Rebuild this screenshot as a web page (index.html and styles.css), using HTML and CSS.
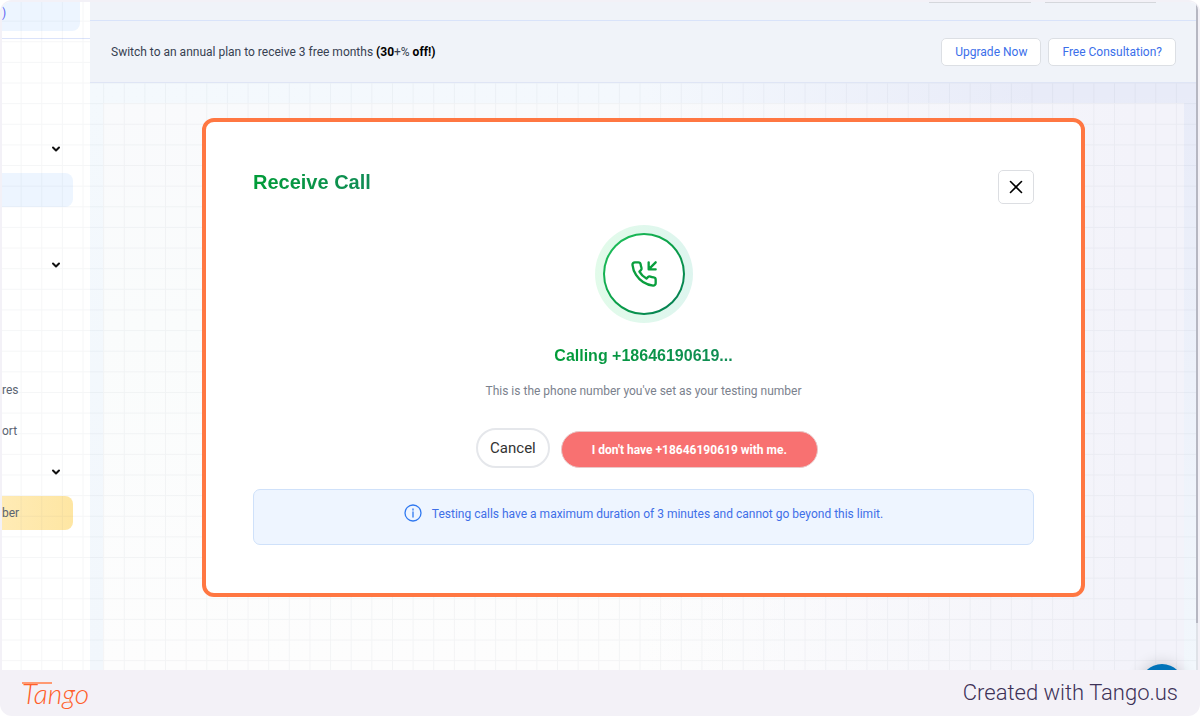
FILE: index.html
```
<!DOCTYPE html>
<html lang="en">
<head>
	<meta charset="UTF-8">
	<meta name="viewport" content="width=device-width, initial-scale=1">
	<title>Receive Call</title>
	<link rel="stylesheet" href="styles.css">
</head>
<body>
<div class="frame">
  <div class="screen">
    <nav class="sidebar">
      <div class="side-top">
        <a class="side-logo" href="#">)</a>
      </div>
      <div class="side-list">
        <button class="side-item toggle" type="button" aria-label="Toggle section">
          <svg class="chevron" viewBox="0 0 10 8"><path d="M2 2.5l3 3 3-3"/></svg>
        </button>
        <a class="side-item active" href="#" aria-label="Current page"></a>
        <button class="side-item toggle second" type="button" aria-label="Toggle section">
          <svg class="chevron" viewBox="0 0 10 8"><path d="M2 2.5l3 3 3-3"/></svg>
        </button>
        <a class="side-item third" href="#">res</a>
        <a class="side-item" href="#">ort</a>
        <button class="side-item toggle" type="button" aria-label="Toggle section">
          <svg class="chevron" viewBox="0 0 10 8"><path d="M2 2.5l3 3 3-3"/></svg>
        </button>
        <a class="side-item number" href="#">ber</a>
      </div>
    </nav>

    <div class="main">
      <div class="topbar">
        <span class="tab"></span>
        <span class="tab wide"></span>
      </div>
      <div class="banner">
        <p class="banner-text">Switch to an annual plan to receive 3 free months <b>(30</b>+%<b> off!)</b></p>
        <button class="btn" type="button">Upgrade Now</button>
        <button class="btn" type="button">Free Consultation?</button>
      </div>
      <div class="canvas">
        <div class="canvas-inner"></div>
        <div class="dialog" role="dialog" aria-labelledby="dialog-title">
          <div class="dialog-head">
            <h1 class="title" id="dialog-title">Receive Call</h1>
            <button class="close" type="button" aria-label="Close">
              <svg viewBox="0 0 14 14"><path d="M1.5 1.5l11 11M12.5 1.5l-11 11"/></svg>
            </button>
          </div>
          <div class="halo">
            <div class="ring">
              <div class="disc">
                <svg class="phone" viewBox="0 0 24 24">
                  <path d="M22 2l-6 6M16 2v6h6"/>
                  <path d="M22 16.92v3a2 2 0 0 1-2.18 2 19.79 19.79 0 0 1-8.63-3.07 19.5 19.5 0 0 1-6-6 19.79 19.79 0 0 1-3.07-8.67A2 2 0 0 1 4.11 2h3a2 2 0 0 1 2 1.72 12.84 12.84 0 0 0 .7 2.81 2 2 0 0 1-.45 2.11L8.09 9.91a16 16 0 0 0 6 6l1.27-1.27a2 2 0 0 1 2.11-.45 12.84 12.84 0 0 0 2.81.7A2 2 0 0 1 22 16.92z"/>
                </svg>
              </div>
            </div>
          </div>
          <h2 class="calling">Calling +18646190619...</h2>
          <p class="hint">This is the phone number you've set as your testing number</p>
          <div class="actions">
            <button class="cancel" type="button">Cancel</button>
            <button class="decline" type="button">I don't have +18646190619 with me.</button>
          </div>
          <div class="notice">
            <svg class="info" viewBox="0 0 18 18"><circle cx="9" cy="9" r="8"/><path d="M9 8v5M9 5v1"/></svg>
            <p>Testing calls have a maximum duration of 3 minutes and cannot go beyond this limit.</p>
          </div>
        </div>
      </div>
    </div>

    <svg class="lines" aria-hidden="true">
      <defs>
        <pattern id="cell" x="-2" y="-2" width="20.63" height="20.63" patternUnits="userSpaceOnUse">
          <path d="M0 .5H21M.5 0V21"/>
        </pattern>
      </defs>
      <rect width="100%" height="100%" fill="url(#cell)"/>
    </svg>
    <span class="chat"></span>
    <span class="scroll"></span>
  </div>

  <footer class="footer">
    <a class="brand" href="#">Tango</a>
    <p class="credit">Created with Tango.us</p>
  </footer>
</div>
</body>
</html>
```
FILE: styles.css
```
* {
  box-sizing: border-box;
  margin: 0;
  padding: 0;
}

body {
  background-color: #fff;
  font: 12px/16px Roboto, "Open Sans", sans-serif;
  color: #374151;
}

button {
  font: inherit;
  cursor: pointer;
}

a {
  color: inherit;
  text-decoration: none;
}

svg {
  fill: none;
  stroke: currentColor;
  stroke-linecap: round;
  stroke-linejoin: round;
}

.frame {
  display: flex;
  flex-direction: column;
  min-height: 100vh;
  padding: 2px 2px 0;
  border-radius: 12px;
  background-color: #f3f1f7;
}

.screen {
  position: relative;
  display: flex;
  flex: 1;
  overflow: hidden;
  border-radius: 8px 8px 0 0;
  background-color: #fff;
}

/* sidebar */
.sidebar {
  width: 88px;
  flex-shrink: 0;
}

.side-top {
  height: 37px;
  border-bottom: 1px solid #dbe3fa;
}

.side-logo {
  display: block;
  width: 78px;
  height: 29px;
  border-radius: 0 0 8px 0;
  background-color: #edf5ff;
  color: #6366f1;
  line-height: 22px;
}

.side-list {
  display: flex;
  flex-direction: column;
  gap: 7px;
  padding: 93px 17px 0 0;
}

.side-item {
  display: flex;
  align-items: center;
  height: 34px;
  border: 0;
  border-radius: 0 8px 8px 0;
  background-color: transparent;
  color: #5b6472;
}

.toggle {
  justify-content: flex-end;
  padding-right: 12px;
  color: #111;
}

.chevron {
  width: 10px;
  height: 8px;
  stroke-width: 2;
}

.active {
  background-color: #edf5ff;
}

.second {
  margin-top: 34px;
}

.third {
  margin-top: 84px;
}

.number {
  background: linear-gradient(90deg, #ffebb5, #fee6a3);
}

/* top of the main column */
.main {
  display: flex;
  flex: 1;
  flex-direction: column;
}

.topbar,
.banner {
  position: relative;
  z-index: 2;
  display: flex;
  background-color: #f0f3f9;
}

.topbar {
  justify-content: flex-end;
  gap: 14px;
  height: 19px;
  padding-right: 42px;
  border-bottom: 1px solid #d9e3fa;
}

.tab {
  width: 102px;
  height: 1px;
  background-color: #d5d7dc;
}

.tab.wide {
  width: 111px;
}

.banner {
  align-items: center;
  gap: 7px;
  padding: 17px 22px 16px 21px;
  border-bottom: 1px solid #dfe5f5;
}

.banner-text {
  flex: 1;
}

.banner-text b {
  color: #000;
}

.btn {
  height: 28px;
  padding: 0 13px;
  border: 1px solid #dcdfe4;
  border-radius: 5px;
  background-color: #fff;
  color: #3b6fea;
}

/* area behind the dialog */
.canvas {
  position: relative;
  flex: 1;
  padding: 35px 113px 73px 112px;
  background:
    linear-gradient(rgba(242, 247, 252, 0), #f2f7fc),
    linear-gradient(90deg, #f4f9fd 0%, #f4f8fd 50%, #e8ebf8 85%);
}

.canvas-inner {
  position: absolute;
  top: 20px;
  right: 14px;
  bottom: 0;
  left: 13px;
  background:
    linear-gradient(90deg, rgba(250, 251, 252, 0) 50%, #f3f3fa 95%),
    linear-gradient(#f9fafc 0%, #fafcfc 40%, #fdfdfd 100%);
}

.lines {
  position: absolute;
  inset: 0;
  z-index: 1;
  width: 100%;
  height: 100%;
  pointer-events: none;
  stroke: rgba(60, 70, 90, .05);
}

.lines rect {
  stroke: none;
}

/* dialog */
.dialog {
  position: relative;
  z-index: 2;
  max-width: 883px;
  margin: 0 auto;
  padding: 48px 47px;
  border: 4px solid #ff7742;
  border-radius: 12px;
  background-color: #fff;
  text-align: center;
}

.dialog-head {
  display: flex;
  justify-content: space-between;
}

.title,
.calling {
  background: linear-gradient(90deg, #009c38, #118c56);
  -webkit-background-clip: text;
  background-clip: text;
  color: transparent;
  font-family: "Liberation Sans", Arial, sans-serif;
  line-height: 24px;
}

.title {
  align-self: flex-start;
  font-size: 20px;
}

.close {
  display: flex;
  align-items: center;
  justify-content: center;
  width: 36px;
  height: 34px;
  border: 1px solid #dcdee2;
  border-radius: 5px;
  background-color: #fff;
  color: #000;
}

.close svg {
  width: 14px;
  height: 14px;
  stroke-width: 1.6;
}

.halo {
  width: 98px;
  margin: 21px auto 0;
  padding: 8px;
  border-radius: 50%;
  background: linear-gradient(90deg, #e2fbea, #def5ef);
}

.ring {
  padding: 2px;
  border-radius: 50%;
  background: linear-gradient(135deg, #22c55e, #0a9f48 50%, #047857);
}

.disc {
  display: flex;
  align-items: center;
  justify-content: center;
  height: 78px;
  border-radius: 50%;
  background-color: #fff;
}

.phone {
  width: 28px;
  height: 28px;
  color: #0a9f3e;
  stroke-width: 2;
}

.calling {
  width: max-content;
  margin: 21px auto 0;
  font-size: 16px;
}

.hint {
  margin-top: 15px;
  color: #7b818d;
}

.actions {
  display: flex;
  align-items: flex-end;
  justify-content: center;
  gap: 11px;
  margin: 29px 0 21px;
  padding-left: 7px;
}

.cancel {
  height: 40px;
  padding: 0 12px;
  border: 2px solid #e5e7eb;
  border-radius: 20px;
  background-color: #fff;
  color: #333;
  font-size: 15px;
}

.decline {
  height: 37px;
  padding: 0 30px;
  border: 1px solid #e9c9c9;
  border-radius: 20px;
  background-color: #f87171;
  color: #fff;
  font-weight: 700;
}

.notice {
  display: flex;
  justify-content: center;
  gap: 10px;
  height: 56px;
  padding-top: 14px;
  border: 1px solid #cfe1fa;
  border-radius: 7px;
  background-color: #eef5ff;
  color: #3f6fe8;
}

.notice p {
  line-height: 20px;
}

.info {
  width: 18px;
  height: 18px;
  color: #2f78f0;
  stroke-width: 1.3;
}

/* things floating over the screen */
.chat {
  position: absolute;
  right: 14px;
  bottom: -38px;
  width: 44px;
  height: 44px;
  border-radius: 50%;
  background-color: #0073b9;
  box-shadow: 0 0 16px rgba(0, 0, 0, .2);
}

.scroll {
  position: absolute;
  top: 0;
  right: 0;
  bottom: 0;
  z-index: 3;
  width: 2px;
  background: linear-gradient(#b6b7c2 93%, #dfe2e8 93%);
}

/* footer */
.footer {
  display: flex;
  align-items: center;
  justify-content: space-between;
  height: 46px;
  padding: 0 20px;
}

.brand {
  position: relative;
  color: #ff5f2b;
  font-family: Lato, sans-serif;
  font-size: 28px;
  font-style: italic;
  font-weight: 300;
  line-height: 32px;
}

/* long bar of the T */
.brand::before {
  content: "";
  position: absolute;
  top: 5px;
  left: 0;
  width: 30px;
  height: 2px;
  background-color: #ff9a72;
}

.credit {
  color: #3d3157;
  font-size: 22px;
  font-weight: 300;
  line-height: 28px;
}
```
